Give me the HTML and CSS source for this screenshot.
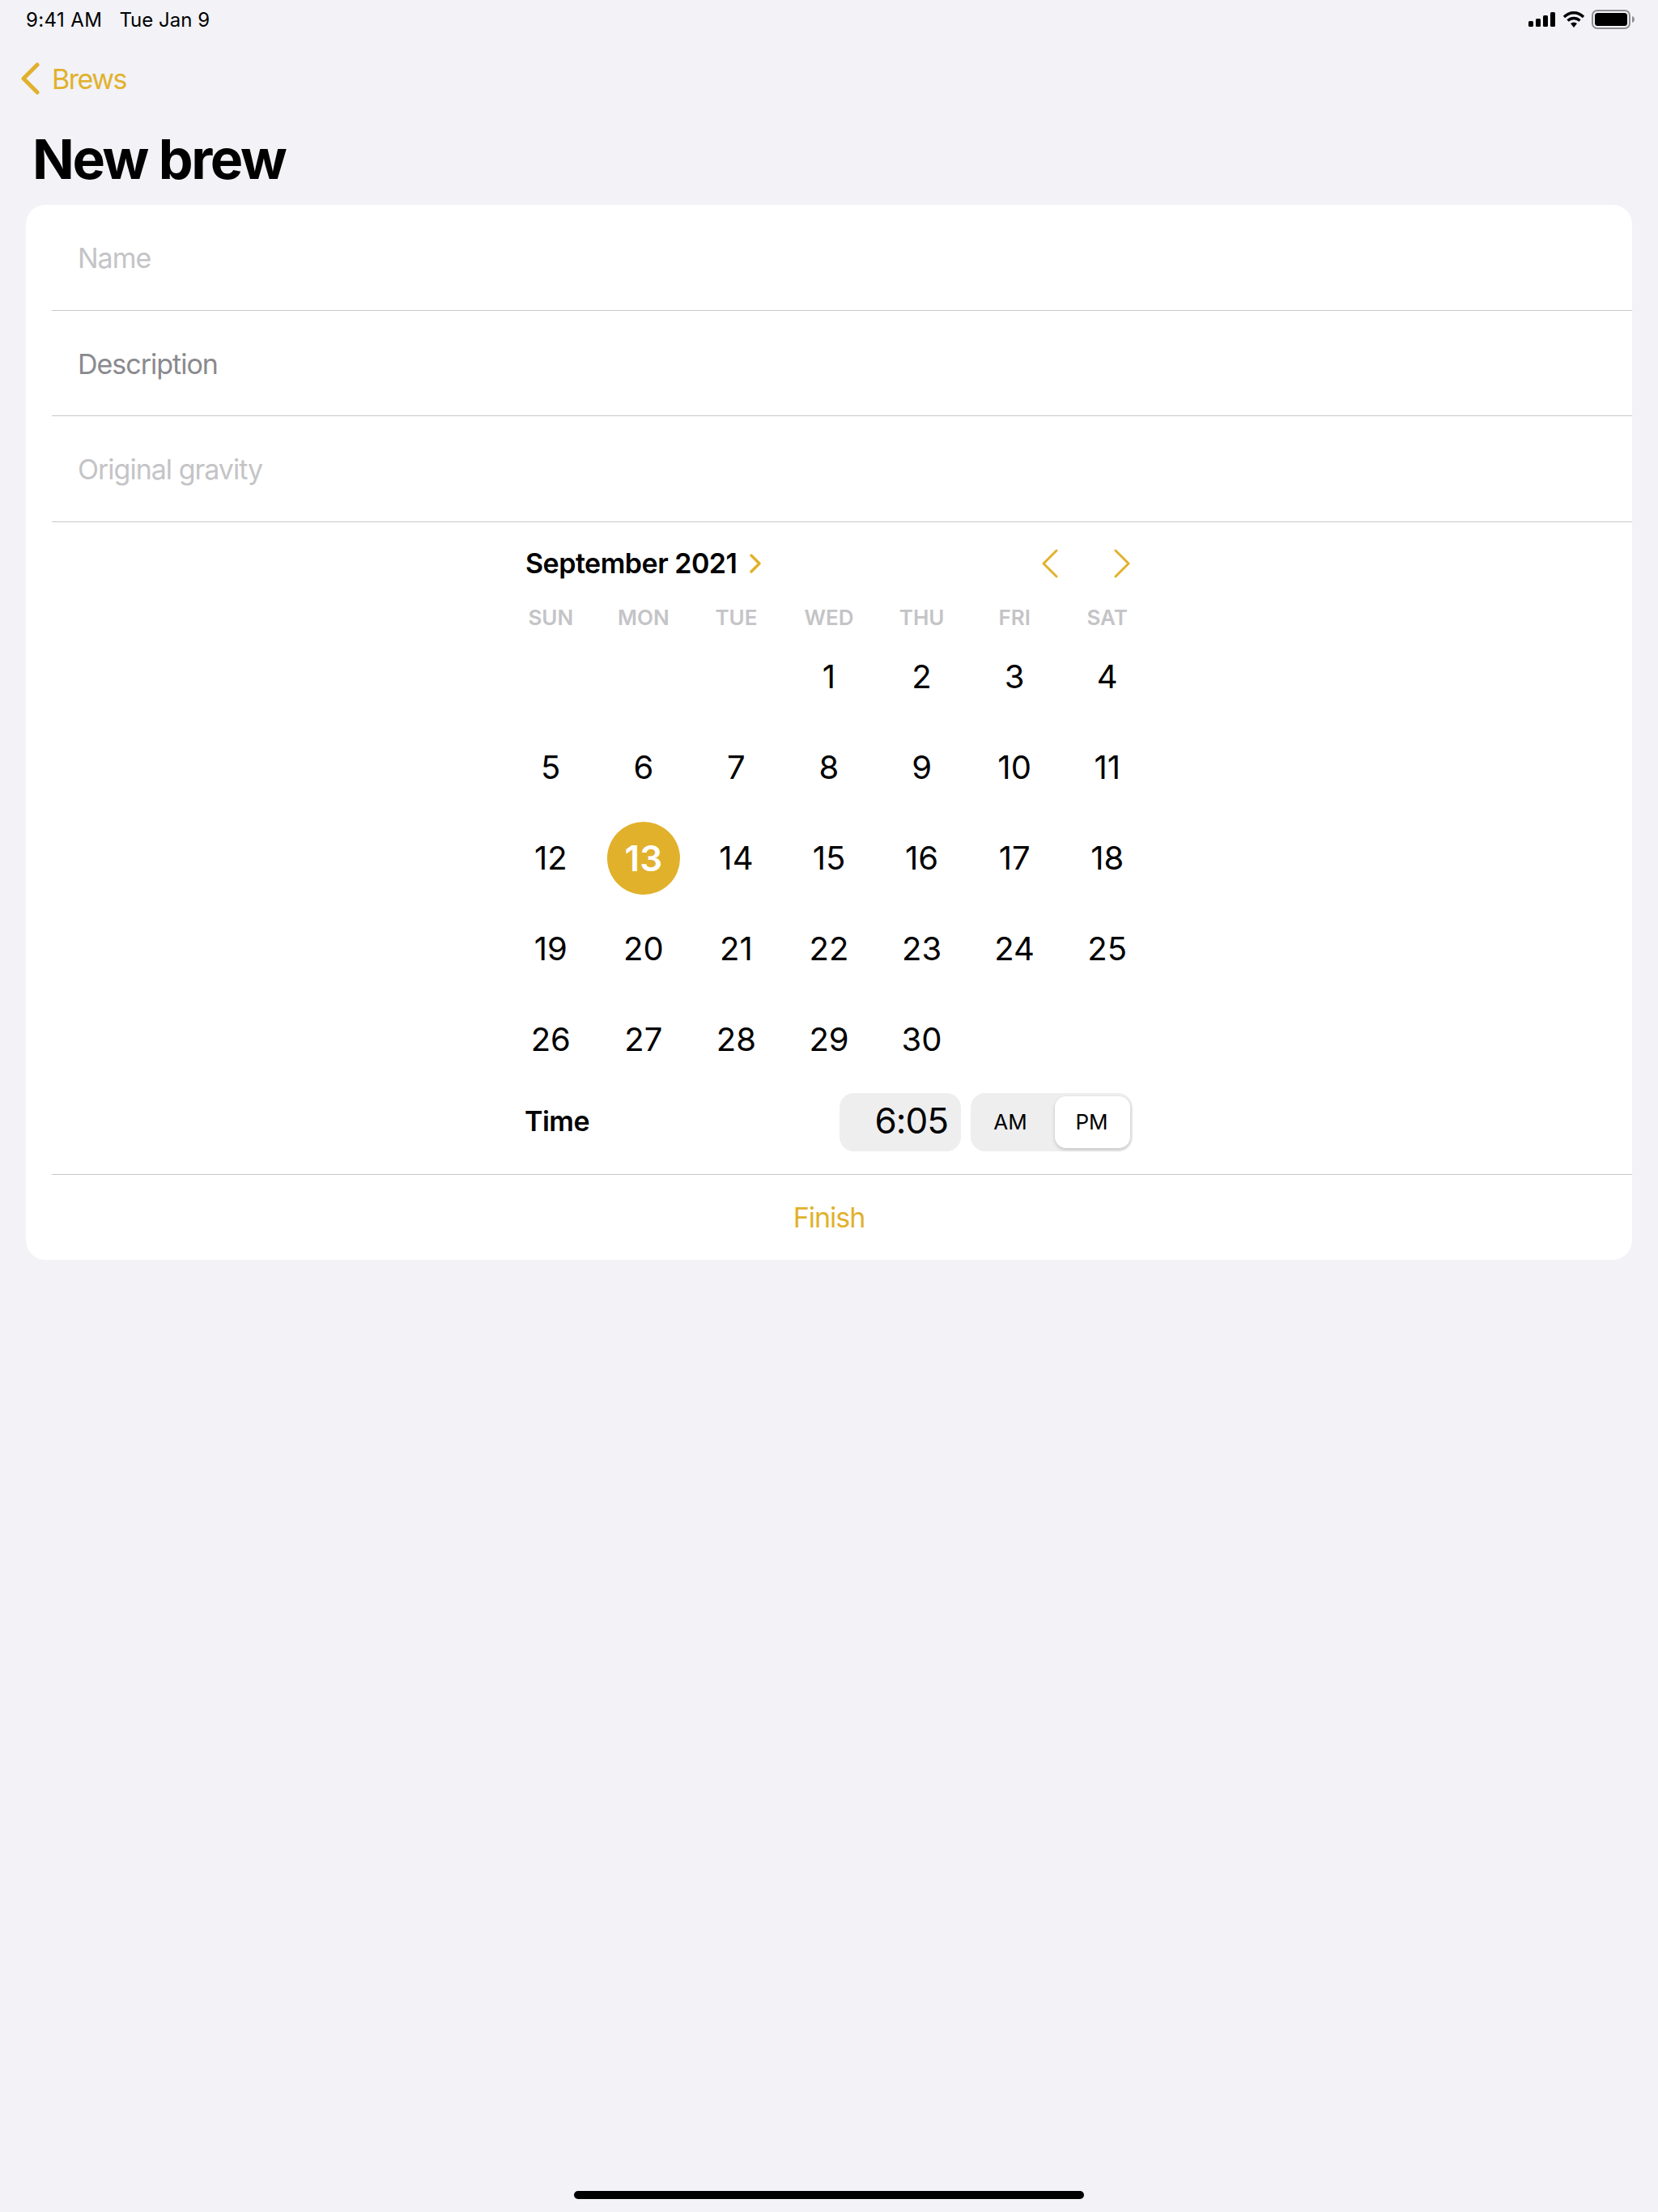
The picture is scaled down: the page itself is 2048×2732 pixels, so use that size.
FILE: index.html
```html
<!DOCTYPE html>
<html lang="en">
<head>
  <meta charset="UTF-8">
  <title>New brew</title>
  <link rel="stylesheet" href="styles.css">
</head>
<body>
  <div class="status-bar">
    <div class="status-time"><span class="clock">9:41 AM</span><span>Tue Jan 9</span></div>
    <div class="status-icons">
      <svg width="34" height="20" viewBox="0 0 34 20"><rect x="0" y="12" width="6" height="7" rx="1.5"/><rect x="9" y="9" width="6" height="10" rx="1.5"/><rect x="18" y="5" width="6" height="14" rx="1.5"/><rect x="27" y="1" width="6" height="18" rx="1.5"/></svg>
      <svg width="28" height="22" viewBox="0 0 28 22"><path d="M2 8 C9 1 19 1 26 8 M6.500 12.500 C11 8.500 17 8.500 21.500 12.500" fill="none" stroke="#000" stroke-width="3.400"/><path d="M10 16 C12.500 14 15.500 14 18 16 L14 21Z"/></svg>
      <svg width="54" height="24" viewBox="0 0 54 24"><rect x="1" y="1" width="46" height="22" rx="6" fill="none" stroke="#8e8e93" stroke-width="2"/><rect x="4" y="4" width="40" height="16" rx="3.500"/><path d="M50 8 C52.500 9 53 10.500 53 12 C53 13.500 52.500 15 50 16Z" fill="#8e8e93"/></svg>
    </div>
  </div>

  <a class="back-link">
    <svg width="24" height="40" viewBox="0 0 24 40"><path d="M21 3 L4 20 L21 37" fill="none" stroke="#e1b12c" stroke-width="5" stroke-linecap="round" stroke-linejoin="round"/></svg>
    <span>Brews</span>
  </a>

  <h1>New brew</h1>

  <div class="card">
    <div class="row placeholder">Name</div>
    <div class="row filled">Description</div>
    <div class="row placeholder">Original gravity</div>

    <div class="picker">
      <div class="month-bar">
        <div class="month-name">
          <span>September 2021</span>
          <svg width="16" height="26" viewBox="0 0 16 26"><path d="M3 3 L13 13 L3 23" fill="none" stroke="#e1b12c" stroke-width="3.500" stroke-linecap="round" stroke-linejoin="round"/></svg>
        </div>
        <div class="month-nav">
          <svg width="22" height="36" viewBox="0 0 22 36"><path d="M19 2 L3 18 L19 34" fill="none" stroke="#e1b12c" stroke-width="3" stroke-linecap="round" stroke-linejoin="round"/></svg>
          <svg width="22" height="36" viewBox="0 0 22 36"><path d="M3 2 L19 18 L3 34" fill="none" stroke="#e1b12c" stroke-width="3" stroke-linecap="round" stroke-linejoin="round"/></svg>
        </div>
      </div>

      <div class="weekdays">
        <span>SUN</span><span>MON</span><span>TUE</span><span>WED</span><span>THU</span><span>FRI</span><span>SAT</span>
      </div>

      <div class="days">
        <span></span><span></span><span></span><span>1</span><span>2</span><span>3</span><span>4</span>
        <span>5</span><span>6</span><span>7</span><span>8</span><span>9</span><span>10</span><span>11</span>
        <span>12</span><span class="selected">13</span><span>14</span><span>15</span><span>16</span><span>17</span><span>18</span>
        <span>19</span><span>20</span><span>21</span><span>22</span><span>23</span><span>24</span><span>25</span>
        <span>26</span><span>27</span><span>28</span><span>29</span><span>30</span><span></span><span></span>
      </div>

      <div class="time-row">
        <span class="time-label">Time</span>
        <div class="time-controls">
          <div class="time-value">6:05</div>
          <div class="ampm">
            <span>AM</span>
            <span class="active">PM</span>
          </div>
        </div>
      </div>
    </div>

    <div class="finish">Finish</div>
  </div>

  <div class="home-bar"></div>
</body>
</html>
```

FILE: styles.css
```css
:root {
  --bg: #f2f2f7;
  --accent: #e1b12c;
  --line: #c8c8cb;
  --muted: #c4c4c7;
}

* {
  box-sizing: border-box;
}

html, body {
  height: 100%;
}

body {
  margin: 0;
  background-color: var(--bg);
  color: #000;
  font-family: Inter, 'Liberation Sans', sans-serif;
  display: flex;
  flex-direction: column;
}

.status-bar {
  height: 48px;
  padding: 0 32px;
  display: flex;
  align-items: center;
  justify-content: space-between;
  font-size: 24px;
}

.status-time {
  display: flex;
  gap: 21px;
}

.clock {
  letter-spacing: 0.4px;
}

.status-icons {
  display: flex;
  align-items: center;
  gap: 8px;
  margin-right: -4px;
}

.back-link {
  margin-top: 22px;
  height: 54px;
  padding-left: 25px;
  display: flex;
  align-items: center;
  gap: 15px;
  color: var(--accent);
  font-size: 34px;
  letter-spacing: -1.5px;
}

h1 {
  margin: 28px 0 0 40px;
  height: 101px;
  font-size: 68px;
  line-height: 88px;
  font-weight: 700;
  letter-spacing: -2.4px;
}

.card {
  margin: 0 32px;
  background-color: #fff;
  border-radius: 24px;
  overflow: hidden;
}

.row {
  height: 130.500px;
  margin-left: 32px;
  padding: 2px 0 0 32px;
  display: flex;
  align-items: center;
  font-size: 34px;
  letter-spacing: -1px;
  border-bottom: 1px solid var(--line);
}

.placeholder {
  color: #c4c4c7;
}

.filled {
  color: #8a8a8e;
}

.picker {
  margin-left: 32px;
  padding-left: 559px;
  height: 806px;
  border-bottom: 1px solid var(--line);
}

.picker > * {
  width: 802px;
}

.month-bar {
  height: 102px;
  padding: 0 28px 0 26px;
  display: flex;
  align-items: center;
  justify-content: space-between;
}

.month-name {
  display: flex;
  align-items: center;
  gap: 15px;
  font-size: 34px;
  font-weight: 600;
  letter-spacing: -0.5px;
}

.month-nav {
  display: flex;
  gap: 67px;
}

.weekdays, .days {
  display: grid;
  grid-template-columns: repeat(7, 1fr);
  justify-items: center;
  align-items: center;
}

.weekdays {
  height: 32px;
  font-size: 26px;
  font-weight: 600;
  color: var(--muted);
}

.days {
  margin-top: 1px;
  grid-auto-rows: 112px;
  font-size: 40px;
}

.days span {
  display: flex;
  align-items: center;
  justify-content: center;
  width: 90px;
  height: 90px;
  border-radius: 50%;
}

.days .selected {
  background-color: var(--accent);
  color: #fff;
  font-size: 44px;
  font-weight: 600;
}

.time-row {
  padding: 0 26px 0 25px;
  margin-top: 9px;
  display: flex;
  align-items: center;
  justify-content: space-between;
  height: 74px;
}

.time-label {
  margin-top: -2px;
  font-size: 34px;
  font-weight: 600;
  letter-spacing: -0.5px;
}

.time-controls {
  display: flex;
  gap: 12px;
}

.time-value {
  width: 150px;
  height: 72px;
  padding: 0 16px 3px 0;
  display: flex;
  align-items: center;
  justify-content: flex-end;
  font-size: 44px;
  letter-spacing: -1px;
  background-color: #eeeeef;
  border-radius: 18px;
}

.ampm {
  width: 200px;
  height: 72px;
  padding: 4px 3px 4px 0;
  display: flex;
  background-color: #eeeeef;
  border-radius: 18px;
  font-size: 26px;
}

.ampm span {
  flex: 1;
  padding-right: 6px;
  display: flex;
  align-items: center;
  justify-content: center;
}

.ampm .active {
  flex: 0 0 93px;
  padding-right: 2px;
  background-color: #fff;
  border-radius: 14px;
  box-shadow: 0 2px 4px rgba(0, 0, 0, 0.18);
}

.finish {
  height: 105px;
  display: flex;
  align-items: center;
  justify-content: center;
  color: var(--accent);
  font-size: 34px;
  letter-spacing: -1px;
}

.home-bar {
  width: 630px;
  height: 10px;
  margin: auto auto 16px;
  background-color: #000;
  border-radius: 5px;
}
```
